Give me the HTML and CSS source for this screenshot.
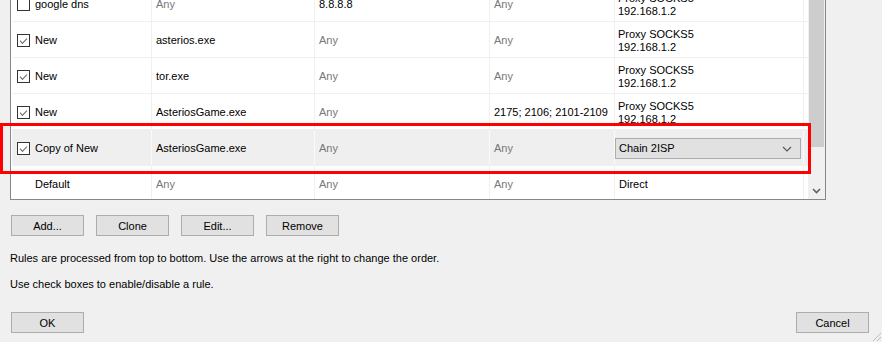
FILE: index.html
```html
<!DOCTYPE html>
<html>
<head>
  <title>Proxification Rules</title>
  <link rel="stylesheet" href="styles.css">
</head>
<body>
  <div class="window">
    <div class="list">
      <div class="rows">
        <div class="rows-inner">
          <div class="row">
            <div class="cell name"><span class="check"></span>google dns</div>
            <div class="cell any">Any</div>
            <div class="cell">8.8.8.8</div>
            <div class="cell any">Any</div>
            <div class="cell action">Proxy SOCKS5<br>192.168.1.2</div>
          </div>
          <div class="row">
            <div class="cell name"><span class="check on"></span>New</div>
            <div class="cell">asterios.exe</div>
            <div class="cell any">Any</div>
            <div class="cell any">Any</div>
            <div class="cell action">Proxy SOCKS5<br>192.168.1.2</div>
          </div>
          <div class="row">
            <div class="cell name"><span class="check on"></span>New</div>
            <div class="cell">tor.exe</div>
            <div class="cell any">Any</div>
            <div class="cell any">Any</div>
            <div class="cell action">Proxy SOCKS5<br>192.168.1.2</div>
          </div>
          <div class="row">
            <div class="cell name"><span class="check on"></span>New</div>
            <div class="cell">AsteriosGame.exe</div>
            <div class="cell any">Any</div>
            <div class="cell">2175; 2106; 2101-2109</div>
            <div class="cell action">Proxy SOCKS5<br>192.168.1.2</div>
          </div>
          <div class="row selected">
            <div class="cell name"><span class="check on"></span>Copy of New</div>
            <div class="cell">AsteriosGame.exe</div>
            <div class="cell any">Any</div>
            <div class="cell any">Any</div>
            <div class="cell combo-cell">
              <div class="combo">
                <span>Chain 2ISP</span>
                <svg width="10" height="6" viewBox="0 0 10 6"><path d="M1 1 L5 5 L9 1" fill="none" stroke="#555" stroke-width="1.1"/></svg>
              </div>
            </div>
          </div>
          <div class="row">
            <div class="cell name"><span class="check none"></span>Default</div>
            <div class="cell any">Any</div>
            <div class="cell any">Any</div>
            <div class="cell any">Any</div>
            <div class="cell">Direct</div>
          </div>
        </div>
      </div>
      <div class="scrollbar">
        <div class="thumb"></div>
        <div class="arrow">
          <svg width="9" height="6" viewBox="0 0 9 6"><path d="M1 1 L4.5 4.5 L8 1" fill="none" stroke="#606060" stroke-width="1.6"/></svg>
        </div>
      </div>
    </div>

    <div class="buttons">
      <button>Add...</button>
      <button>Clone</button>
      <button>Edit...</button>
      <button>Remove</button>
    </div>

    <p class="note">Rules are processed from top to bottom. Use the arrows at the right to change the order.</p>
    <p class="note second">Use check boxes to enable/disable a rule.</p>

    <div class="footer">
      <button>OK</button>
      <button>Cancel</button>
    </div>

    <div class="marker"></div>
    <svg class="grip" width="12" height="12" viewBox="0 0 12 12">
      <path d="M11 3 L3 11 M11 7 L7 11" stroke="#bdbdbd" stroke-width="1"/>
    </svg>
  </div>
</body>
</html>
```

FILE: styles.css
```css
body {
  margin: 0;
  background-color: #f0f0f0;
  font-family: "Liberation Sans", Arial, sans-serif;
  font-size: 11px;
  color: #000;
}
.window {
  position: relative;
  width: 882px;
  height: 342px;
  overflow: hidden;
}
.list {
  display: flex;
  margin-left: 10px;
  width: 816px;
  height: 200px;
  box-sizing: border-box;
  border: 1px solid #828790;
  border-top: none;
  background-color: #fff;
}
.rows {
  flex: 1;
  overflow: hidden;
  padding-left: 1px;
}
.rows-inner {
  margin-top: -14px;
}
.row {
  display: grid;
  grid-template-columns: 140px 163px 175px 125px 189px;
  height: 36px;
  box-sizing: border-box;
  border-bottom: 1px solid #f0f0f0;
}
.row.selected {
  background-color: #efefef;
}
.cell {
  display: flex;
  align-items: center;
  padding-left: 4px;
  padding-top: 2px;
  border-right: 1px solid #f0f0f0;
  white-space: nowrap;
  overflow: hidden;
  line-height: 13px;
}
.row.selected .cell {
  border-right-color: #fafafa;
}
.cell.name {
  padding-left: 5px;
  gap: 5px;
}
.cell.action {
  display: block;
  padding-top: 6px;
  padding-left: 3px;
}
.cell.any {
  color: #777;
}
.check {
  width: 13px;
  height: 13px;
  box-sizing: border-box;
  border: 1px solid #333;
  background-color: #fff;
  flex-shrink: 0;
  position: relative;
}
.check.on::after {
  content: "";
  position: absolute;
  left: 2px;
  top: 1px;
  width: 6px;
  height: 3px;
  border-left: 1.2px solid #666;
  border-bottom: 1.2px solid #666;
  transform: translate(0, 2px) rotate(-45deg);
}
.check.none {
  visibility: hidden;
}
.combo-cell {
  padding-left: 0;
  align-items: flex-start;
  padding-top: 8px;
}
.combo {
  display: flex;
  align-items: center;
  justify-content: space-between;
  width: 186px;
  height: 21px;
  box-sizing: border-box;
  border: 1px solid #adadad;
  background-color: #e1e1e1;
  padding: 0 8px 0 3px;
}
.scrollbar {
  width: 17px;
  background-color: #f0f0f0;
  display: flex;
  flex-direction: column;
  align-items: center;
}
.thumb {
  width: 15px;
  height: 147px;
  background-color: #cdcdcd;
}
.arrow {
  margin-top: auto;
  height: 17px;
  display: flex;
  align-items: center;
  justify-content: center;
}
button {
  font-family: "Liberation Sans", Arial, sans-serif;
  font-size: 11px;
  width: 73px;
  height: 21px;
  padding: 0;
  background-color: #e1e1e1;
  border: 1px solid #adadad;
  color: #000;
}
.buttons {
  display: flex;
  gap: 12px;
  margin: 15px 0 0 11px;
}
.note {
  margin: 16px 0 0 10px;
  line-height: 13px;
}
.note.second {
  margin-top: 13px;
}
.footer {
  display: flex;
  justify-content: space-between;
  margin-top: 21px;
  padding: 0 13px 0 11px;
}
.marker {
  position: absolute;
  left: 0;
  top: 123px;
  width: 811px;
  height: 51px;
  box-sizing: border-box;
  border: 3px solid #ff0000;
}
.grip {
  position: absolute;
  right: 0;
  bottom: 0;
}
```
